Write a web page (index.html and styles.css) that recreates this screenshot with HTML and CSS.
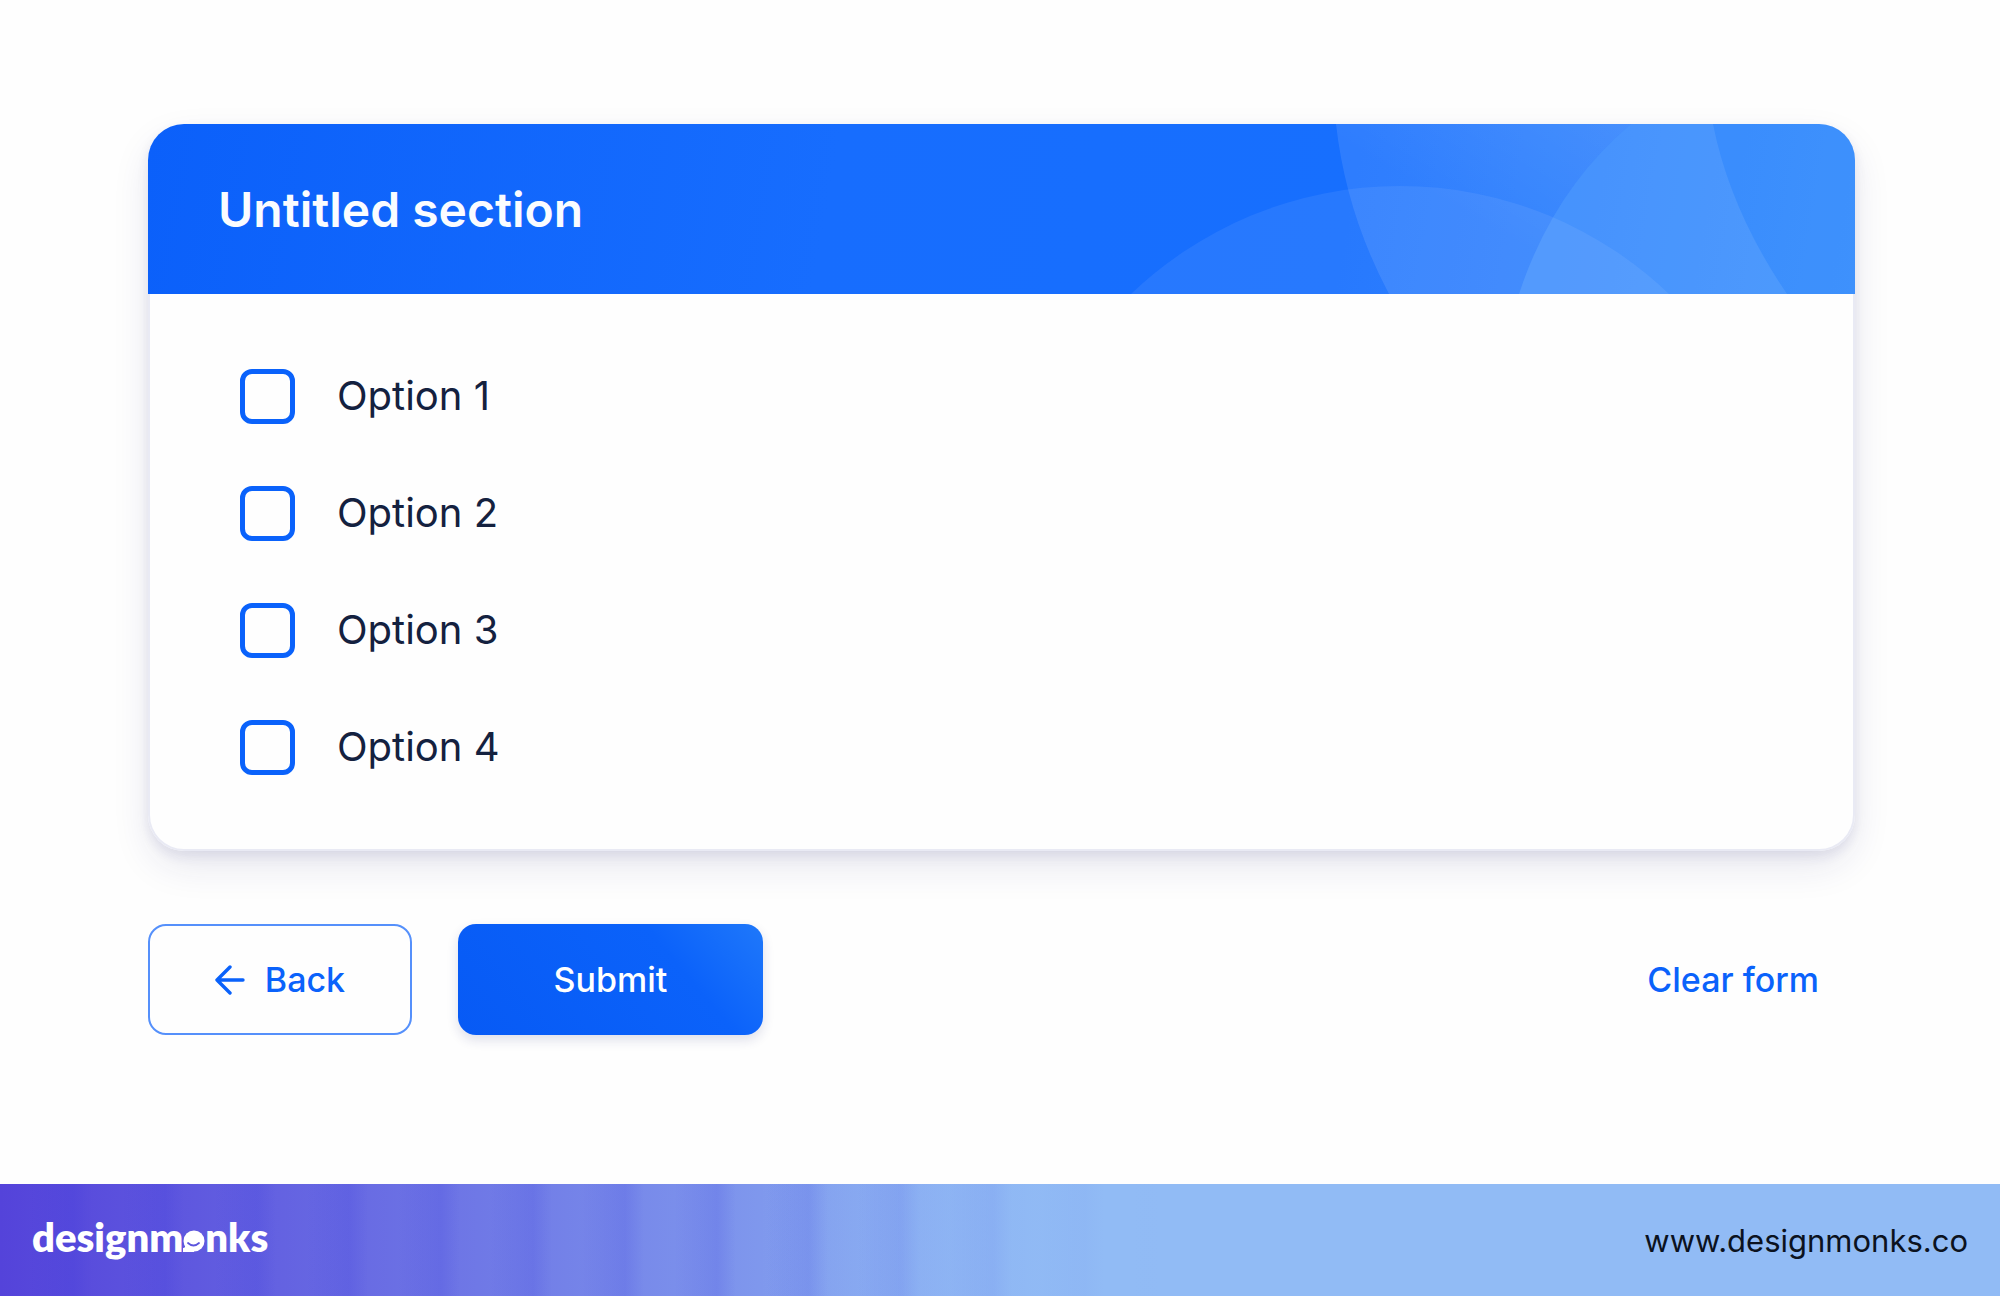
FILE: index.html
```
<!DOCTYPE html>
<html lang="en">
<head>
  <meta charset="UTF-8">
  <meta name="viewport" content="width=device-width, initial-scale=1.0">
  <title>Untitled section</title>
  <link rel="stylesheet" href="styles.css">
</head>
<body>

  <main>
    <form id="optionsForm">
      <section class="card">
        <div class="card-header">
          <svg class="shapes" viewBox="0 0 1707 170" preserveAspectRatio="xMaxYMid slice" aria-hidden="true">
            <defs>
              <linearGradient id="glow" x1="0" y1="1" x2="1" y2="0">
                <stop offset="0.45" stop-color="#fff" stop-opacity="0" />
                <stop offset="1" stop-color="#fff" stop-opacity="0.08" />
              </linearGradient>
            </defs>
            <path d="M1188 0 Q1198 89 1241 170 H1639 Q1582 86 1565 0 Z" fill="#fff" fill-opacity="0.1" />
            <path d="M1188 0 Q1198 89 1241 170 H1371 Q1405 66 1483 0 Z" fill="url(#glow)" />
            <path d="M1483 0 Q1405 66 1371 170 H1707 V0 Z" fill="#7ac0ff" fill-opacity="0.25" />
            <circle cx="1252" cy="451" r="389" fill="#fff" fill-opacity="0.07" />
          </svg>
          <h1>Untitled section</h1>
        </div>
        <div class="card-body">
          <label class="option"><input type="checkbox" name="option" value="1">Option 1</label>
          <label class="option"><input type="checkbox" name="option" value="2">Option 2</label>
          <label class="option"><input type="checkbox" name="option" value="3">Option 3</label>
          <label class="option"><input type="checkbox" name="option" value="4">Option 4</label>
        </div>
      </section>

      <div class="actions">
        <button type="button" class="btn btn-back">
          <svg width="30" height="30" viewBox="0 0 30 30" fill="none" stroke="currentColor" stroke-width="3.4" stroke-linecap="round" stroke-linejoin="round" aria-hidden="true">
            <path d="M28 15H2M15 2L2 15L15 28" />
          </svg>
          Back
        </button>
        <button type="submit" class="btn btn-submit">Submit</button>
        <button type="reset" class="btn btn-clear">Clear form</button>
      </div>
    </form>
  </main>

  <footer>
    <div class="logo">
      <span>designm</span>
      <svg width="22" height="22" viewBox="0 0 22 22" aria-hidden="true">
        <circle cx="11" cy="11" r="10.5" fill="#fff" />
        <path d="M0 22V18Q3 18 2 14L11 12V22Z" fill="#fff" />
        <path d="M5 13Q10.5 18 16 13" fill="none" stroke="#5c55dd" stroke-width="1.8" stroke-linecap="round" />
      </svg>
      <span>nks</span>
    </div>
    <a href="#" class="site">www.designmonks.co</a>
  </footer>

</body>
</html>
```
FILE: styles.css
```
* {
  box-sizing: border-box;
}

body {
  margin: 0;
  min-height: 100vh;
  display: flex;
  flex-direction: column;
  font-family: Inter, Arial, sans-serif;
  background-color: #fefefe;
}

main {
  flex: 1;
  padding: 124px 145px 60px 148px;
}

.card {
  border-radius: 36px;
  background-color: #fefefe;
  box-shadow: 0 16px 40px -4px rgba(30, 35, 110, 0.12), 0 5px 12px rgba(30, 35, 110, 0.09);
}

.card-header {
  position: relative;
  overflow: hidden;
  padding: 56px 70px 54px;
  border-radius: 36px 36px 0 0;
  background: linear-gradient(100deg, #0b60fa 0%, #176dfe 40%, #176ffe 70%, #2a82fb 100%);
}

.shapes {
  position: absolute;
  top: 0;
  left: 0;
  width: 100%;
  height: 100%;
}

h1 {
  position: relative;
  margin: 0;
  font-size: 48px;
  line-height: 60px;
  font-weight: 600;
  color: #fafcff;
}

.card-body {
  display: flex;
  flex-direction: column;
  align-items: flex-start;
  gap: 61px;
  padding: 74px 90px 74px;
  border: 2px solid #e9eaf4;
  border-top: none;
  border-radius: 0 0 36px 36px;
}

.option {
  display: flex;
  align-items: center;
  gap: 42px;
  font-size: 40px;
  line-height: 56px;
  color: #14213f;
}

.option input {
  appearance: none;
  width: 55px;
  height: 55px;
  margin: 0;
  border: 5px solid #0a62fb;
  border-radius: 12px;
  cursor: pointer;
}

.option input:checked {
  background-color: #0a62fb;
  box-shadow: inset 0 0 0 6px #fff;
}

.actions {
  display: flex;
  gap: 46px;
  margin-top: 73px;
}

.btn {
  display: flex;
  align-items: center;
  justify-content: center;
  height: 111px;
  padding: 0;
  border: none;
  border-radius: 18px;
  font-family: inherit;
  font-size: 34px;
  font-weight: 500;
  color: #0a62fb;
  background: none;
  cursor: pointer;
}

.btn-back {
  gap: 20px;
  width: 264px;
  border: 2px solid #5590fb;
}

.btn-submit {
  width: 305px;
  color: #fff;
  background: linear-gradient(50deg, #075af5 0%, #0b62fa 70%, #1f78fa 100%);
  box-shadow: 0 5px 12px rgba(30, 35, 110, 0.14);
}

.btn-clear {
  margin-left: auto;
  padding-right: 36px;
}

footer {
  display: flex;
  align-items: center;
  justify-content: space-between;
  height: 112px;
  padding: 0 32px;
  background:
    linear-gradient(90deg, rgba(145, 187, 245, 0) 38%, #91bbf5 58%),
    repeating-linear-gradient(90deg, rgba(50, 50, 220, 0) 0, rgba(50, 50, 220, 0) 30px, rgba(50, 50, 220, 0.14) 73px, rgba(50, 50, 220, 0) 92px),
    linear-gradient(90deg, #5443da 0%, #91bbf5 54%);
}

.logo {
  display: flex;
  align-items: baseline;
  padding-bottom: 6px;
  font-family: Lato, sans-serif;
  font-size: 40px;
  font-weight: 800;
  color: #fff;
}

.site {
  font-family: Inter, sans-serif;
  font-size: 31px;
  color: #0b1220;
  text-decoration: none;
}
```
